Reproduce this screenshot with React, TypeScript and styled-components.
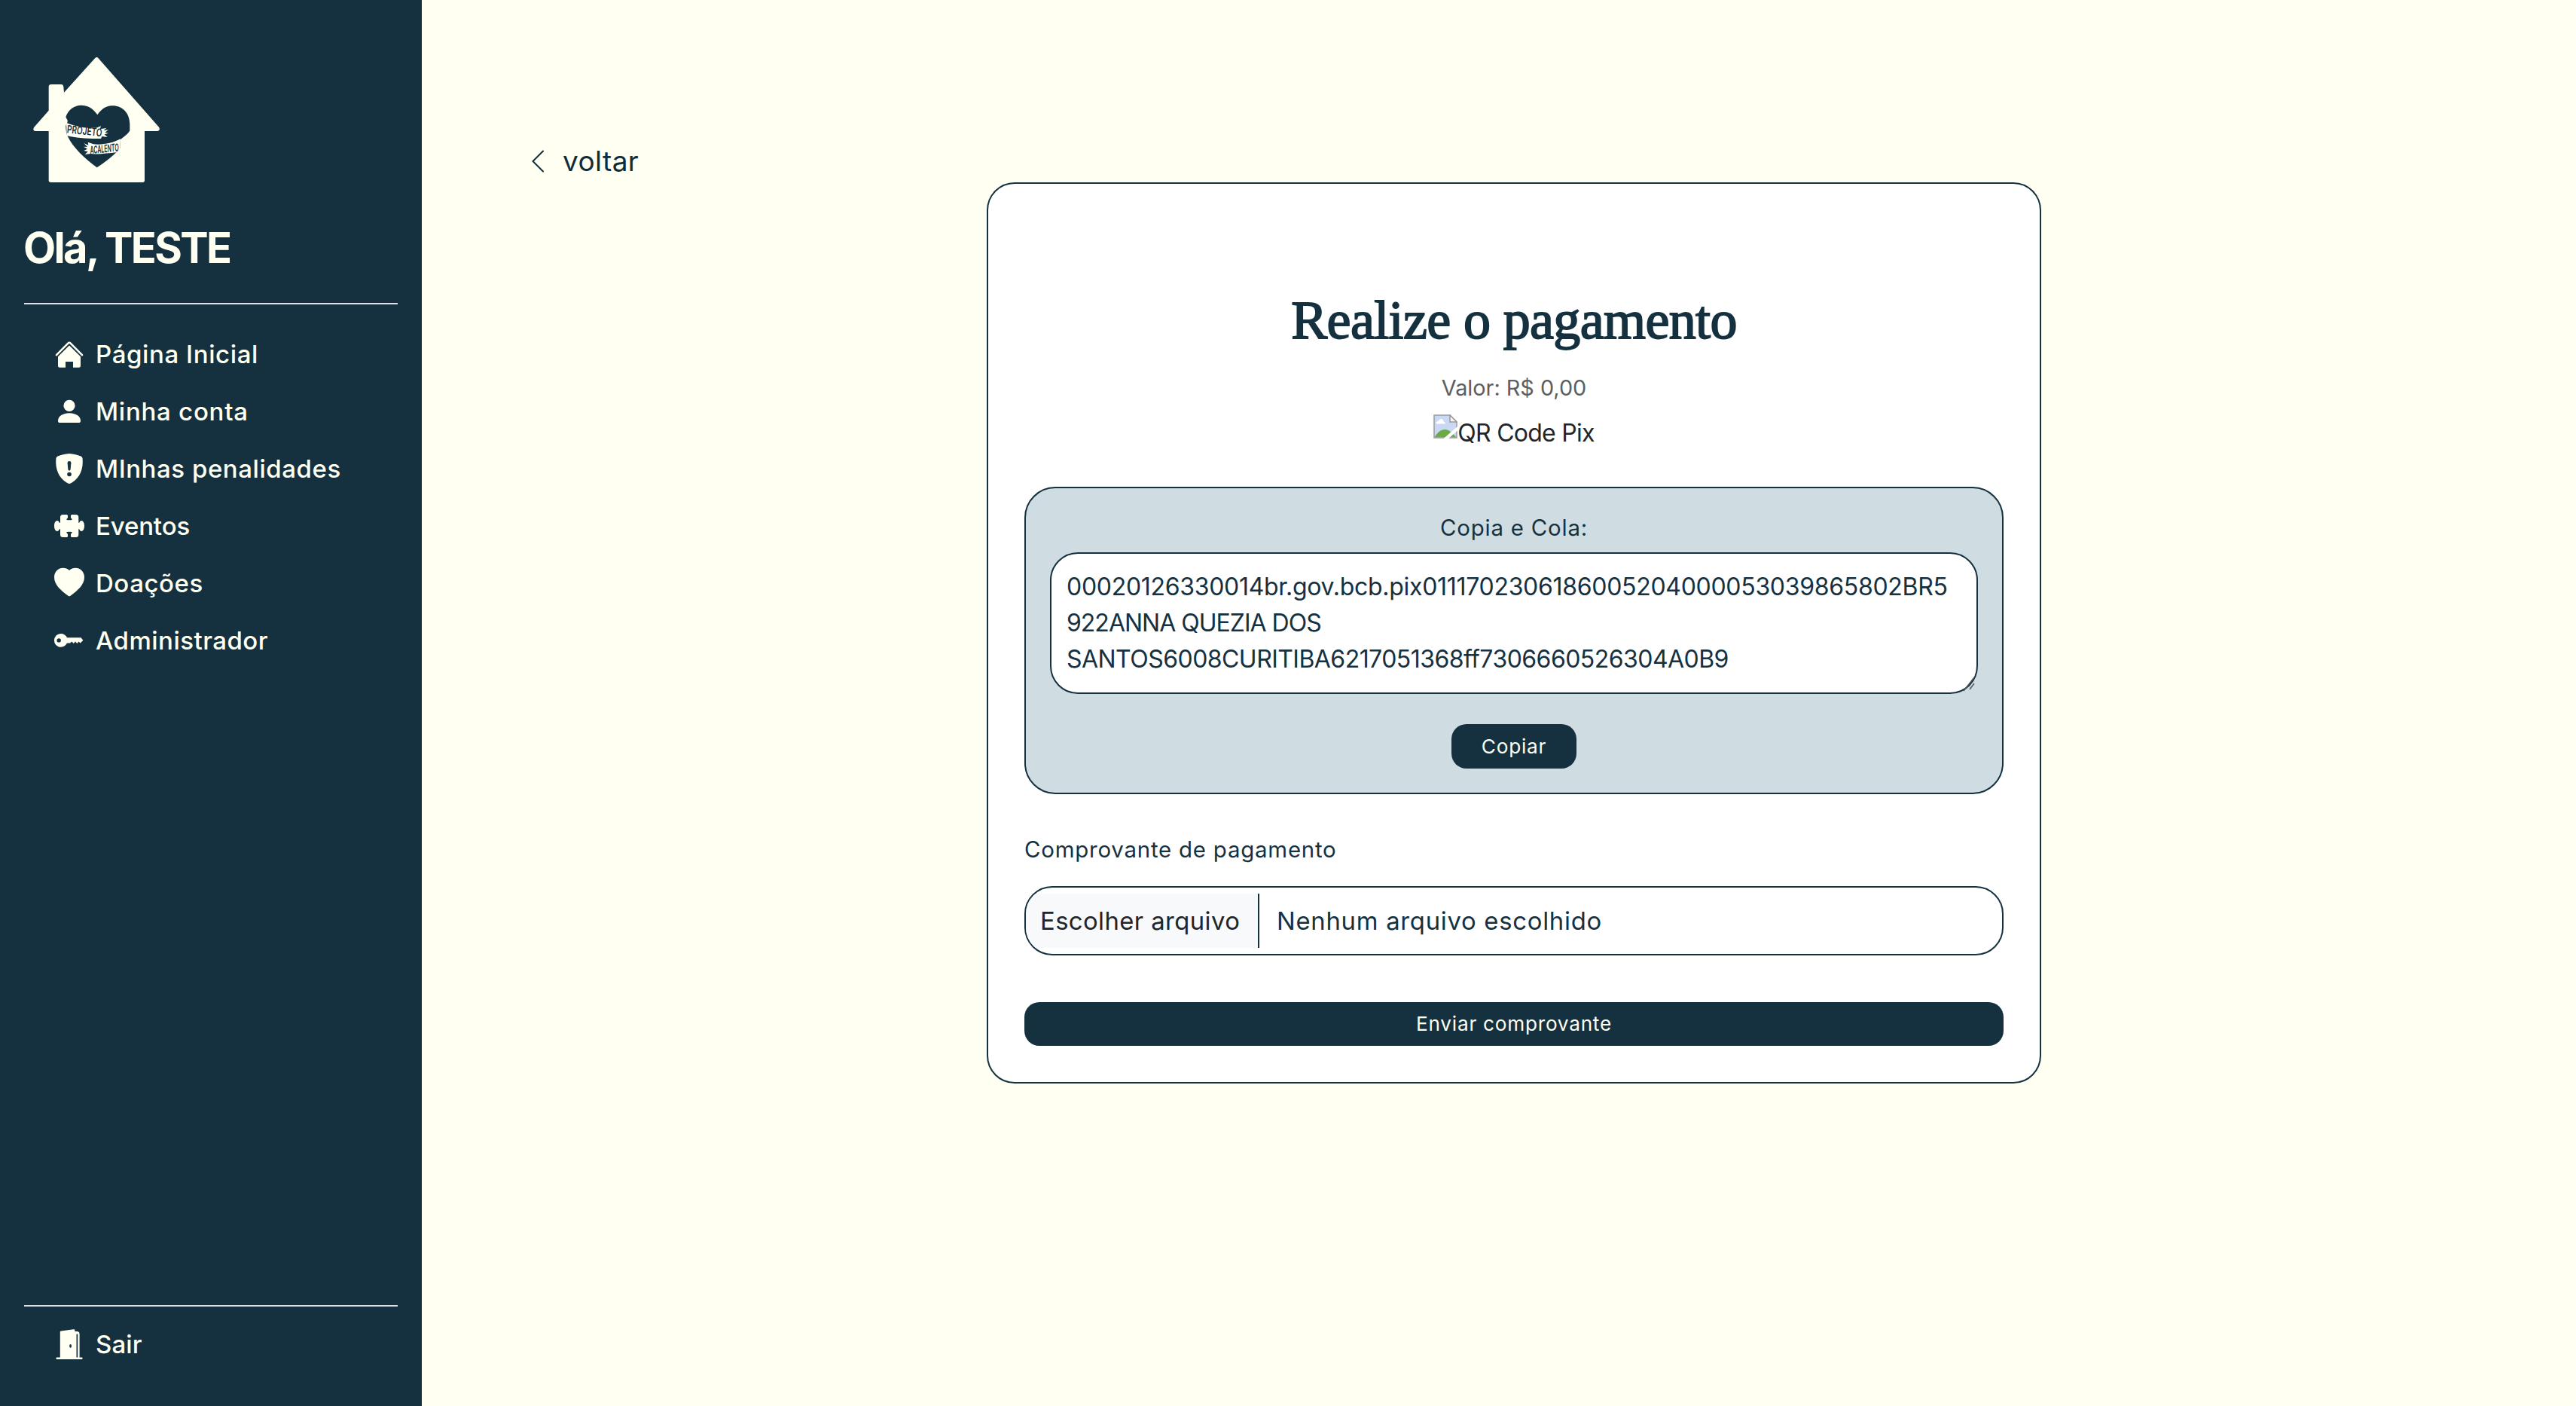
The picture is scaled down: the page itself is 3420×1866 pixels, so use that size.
import React from "react";
import styled, { createGlobalStyle } from "styled-components";

const navy = "#15313f";
const cream = "#fffff2";

const GlobalStyle = createGlobalStyle`
  * { box-sizing: border-box; }
  body {
    margin: 0;
    background: ${cream};
    font-family: Inter, "Open Sans", sans-serif;
    color: ${navy};
  }
`;

const Page = styled.div`
  display: flex;
  width: 3420px;
  height: 1866px;
  overflow: hidden;
  background: ${cream};
`;

const Sidebar = styled.aside`
  display: flex;
  flex-direction: column;
  width: 560px;
  height: 100%;
  padding: 76px 32px 62px;
  background: ${navy};
  color: ${cream};
`;

const LogoArt = styled.svg`
  flex: none;
  width: 168px;
  height: 166px;
  margin-left: 12px;
`;

const Greeting = styled.h1`
  margin: 54px 0 39px -1px;
  font-size: 56px;
  font-weight: 700;
  line-height: 67px;
  letter-spacing: -2.6px;
`;

const Divider = styled.hr`
  flex: none;
  width: 100%;
  height: 2px;
  margin: 0;
  border: 0;
  background: #dee2e6;
`;

const Nav = styled.nav<{ $top: number }>`
  display: flex;
  flex-direction: column;
  gap: 36px;
  margin-top: ${(p) => p.$top}px;
  padding-left: 40px;
`;

const NavItem = styled.a<{ $tracking: number }>`
  display: flex;
  align-items: center;
  gap: 15px;
  height: 40px;
  font-size: 33px;
  font-weight: 500;
  line-height: 40px;
  letter-spacing: ${(p) => p.$tracking}px;
  white-space: nowrap;
`;

const NavIcon = styled.svg`
  width: 40px;
  height: 40px;
  overflow: visible;
  fill: ${cream};
`;

const Spacer = styled.div`
  flex: 1;
`;

const Main = styled.main`
  flex: 1;
  display: flex;
  flex-direction: column;
  align-items: flex-start;
  padding-top: 194px;
`;

const BackLink = styled.a`
  display: flex;
  align-items: center;
  gap: 25px;
  height: 40px;
  margin-left: 146px;
  font-size: 37px;
  line-height: 40px;
  letter-spacing: 0.4px;
  color: #102c39;
`;

const Card = styled.section`
  display: flex;
  flex-direction: column;
  align-items: center;
  width: 1400px;
  margin: 8px 0 0 750px;
  padding: 139px 48px 48px;
  border: 2px solid ${navy};
  border-radius: 37px;
  background: #fff;
`;

const Title = styled.h2`
  margin: 0;
  font-family: "Liberation Serif", serif;
  font-size: 72px;
  font-weight: 400;
  line-height: 85px;
  letter-spacing: -0.64px;
  -webkit-text-stroke: 1.8px ${navy};
`;

const Amount = styled.p`
  margin: 25px 0 13px;
  font-size: 28.8px;
  line-height: 44px;
  color: #5c5e60;
`;

const QrFallback = styled.div`
  display: flex;
  align-items: flex-start;
  height: 48px;
  font-size: 32px;
  line-height: 50px;
  letter-spacing: -0.75px;
  color: #212529;
`;

const Panel = styled.div`
  display: flex;
  flex-direction: column;
  align-items: center;
  width: 100%;
  margin-top: 48px;
  padding: 31px 32px 32px;
  border: 2px solid ${navy};
  border-radius: 41px;
  background: #cfdde2;
`;

const Label = styled.label`
  font-size: 29.4px;
  line-height: 44px;
  letter-spacing: 0.8px;
`;

const CodeBox = styled.div`
  position: relative;
  width: 100%;
  height: 188px;
  margin: 10px 0 40px;
  padding: 20px 20px;
  border: 2px solid ${navy};
  border-radius: 37px;
  background: #fff;
`;

const CodeLine = styled.div<{ $tracking: number }>`
  font-size: 32px;
  line-height: 48px;
  letter-spacing: ${(p) => p.$tracking}px;
  white-space: nowrap;
`;

const ResizeGrip = styled.svg`
  position: absolute;
  right: 0;
  bottom: 0;
`;

const Button = styled.button<{ $width: string; $height: number }>`
  width: ${(p) => p.$width};
  height: ${(p) => p.$height}px;
  padding: 0 0 1px;
  border: 0;
  border-radius: 20px;
  background: ${navy};
  color: ${cream};
  font-family: inherit;
  font-size: 26.2px;
  letter-spacing: 0.75px;
`;

const FieldLabel = styled(Label)`
  align-self: flex-start;
  margin: 52px 0 26px;
`;

const FileField = styled.div`
  display: flex;
  width: 100%;
  height: 92px;
  margin-bottom: 62px;
  padding: 8px 0;
  overflow: hidden;
  border: 2px solid ${navy};
  border-radius: 37px;
  background: #fff;
  font-size: 32.8px;
  line-height: 72px;
`;

const FileButton = styled.span`
  width: 310px;
  padding-left: 19px;
  border-right: 2px solid ${navy};
  background: #f8f9fa;
  color: #212529;
  letter-spacing: 0.42px;
  white-space: nowrap;
`;

const FileName = styled.span`
  padding-left: 23px;
  letter-spacing: 0.74px;
`;

function Logo() {
  return (
    <LogoArt viewBox="132 108 504 498">
      <path
        fill={cream}
        d="M379 111Q385 105 391 111L633 386Q640 400 628 402H576V598Q576 606 568 606H202Q194 606 194 598V402H140Q128 400 136 386L194 320V226Q194 216 204 216H243Q252 216 253 226L255 248Z"
      />
      <path
        fill={navy}
        d="M388 337C369 309 347 299 323 299C295 299 271 318 262 346L270 362L262 380C262 398 264 412 270 424C291 468 338 512 386 547C424 522 458 494 478 470L480 436C499 420 511 412 517 400V374C516 330 488 300 446 301C420 302 405 314 388 337Z"
      />
      <path
        fill={cream}
        d="M264 368C300 384 345 392 384 389L402 382L398 394L424 390L412 400L432 397L418 407L432 410L416 415L428 426L406 423L402 432C350 433 302 429 266 420Z"
      />
      <path
        fill={cream}
        d="M334 450L352 458L350 446L372 454C410 458 445 450 480 433L478 474L462 487C430 490 390 496 360 492L338 495L350 484L334 480L348 473L333 464L348 465Z"
      />
      <text
        x="266"
        y="409"
        fill={navy}
        fontFamily="Inter, sans-serif"
        fontWeight="600"
        fontSize="43"
        textLength="140"
        lengthAdjust="spacingAndGlyphs"
        transform="rotate(6 266 407)"
      >
        PROJETO
      </text>
      <text
        x="360"
        y="493"
        fill={navy}
        fontFamily="Inter, sans-serif"
        fontWeight="600"
        fontSize="42"
        fontStyle="italic"
        textLength="115"
        lengthAdjust="spacingAndGlyphs"
        transform="rotate(-6 360 493)"
      >
        ACALENTO
      </text>
    </LogoArt>
  );
}

const icons = {
  home: (
    <>
      <path
        d="M3 21.2L18.6 5.4Q20 4 21.4 5.4L37 21.2"
        fill="none"
        stroke={cream}
        strokeWidth="2.6"
        strokeLinecap="round"
        strokeLinejoin="round"
      />
      <path d="M20 8.4L35 23.2V35.6Q35 37.8 32.8 37.8H25V30H15V37.8H7.2Q5 37.8 5 35.6V23.2Z" />
    </>
  ),
  person: (
    <>
      <circle cx="20" cy="12.4" r="7.6" />
      <path d="M5 32.4C5 26.4 11.5 22.2 20 22.2S35 26.4 35 32.4Q35 35 32.4 35H7.6Q5 35 5 32.4Z" />
    </>
  ),
  shield: (
    <>
      <path d="M20 0C26 .2 30.5 1.8 35.4 3.4Q37.4 4.2 37.6 6.4C38.8 20 34.5 31.5 23.5 38.6Q20 41.2 16.5 38.6C5.5 31.5 1.2 20 2.4 6.4Q2.6 4.2 4.6 3.4C9.5 1.8 14 .2 20 0Z" />
      <path
        fill={navy}
        d="M17.6 12.2Q17.7 10 20 10T22.4 12.2L21.6 21Q21.4 22.6 20 22.6T18.4 21Z"
      />
      <circle cx="20" cy="27.5" r="2.8" fill={navy} />
    </>
  ),
  puzzle: (
    <path d="M11.5 5H16.5Q18 5 18 6.5V8.5Q18 9.5 17 10.3Q16.200 11 16.4 12Q20 12.7 23.6 12Q23.800 11 23 10.3Q22 9.5 22 8.5V6.5Q22 5 23.5 5H28.800Q32.300 5 32.300 8.5V16C34.200 16 33.5 13 36 13C38.5 13 40 16 40 20S38.5 27 36 27C33.5 27 34.200 24 32.300 24V31.5Q32.300 35 28.800 35H23.5Q22 35 22 33.5V31.5Q22 30.5 23 29.7Q23.800 29 23.600 28Q20 27.300 16.400 28Q16.200 29 17 29.700Q18 30.500 18 31.500V33.500Q18 35 16.500 35H11.500Q8 35 8 31.500V24C6 24 6.500 27 4 27C1.500 27 0 24 0 20S1.500 13 4 13C6.500 13 6 16 8 16V8.500Q8 5 11.500 5Z" />
  ),
  heart: (
    <path d="M20 3C17.8 .8 14.8 -.3 11.6 -.3C5 -.3 0 5 0 12C0 22 8.5 29.5 18.5 36.7Q20 38 21.5 36.7C31.5 29.5 40 22 40 12C40 5 35 -.3 28.4 -.3C25.2 -.3 22.2 .8 20 3Z" />
  ),
  key: (
    <path
      fillRule="evenodd"
      d="M9 11C12.500 11 15.500 13 17 16.200H35.500L38.400 19.800L34.700 23.500L32.500 21.600L30.400 24L28 21.600L25.700 24L23.300 21.600L21 23.500H17C15.500 26.500 12.500 28.700 9 28.700C4 28.700 0 24.900 0 19.900S4 11 9 11ZM6.200 17.200A2.700 2.700 0 1 0 6.200 22.600A2.700 2.700 0 1 0 6.200 17.200Z"
    />
  ),
  door: (
    <>
      <path d="M7.800 3.600Q7.800 2.600 8.800 2.400L25.500 .2Q27.400 0 27.400 1.600V3H31Q33.600 3.400 33.600 6V38H31.200V6.500H29.500V38H7.800Z" />
      <rect x="2.400" y="37.600" width="35.200" height="2.400" rx="1.200" />
      <ellipse cx="21.600" cy="22.400" rx="1.400" ry="2.300" fill={navy} />
    </>
  ),
};

type IconName = keyof typeof icons;

const menu: { icon: IconName; text: string; tracking: number }[] = [
  { icon: "home", text: "Página Inicial", tracking: 0.6 },
  { icon: "person", text: "Minha conta", tracking: 0.74 },
  { icon: "shield", text: "MInhas penalidades", tracking: 0.55 },
  { icon: "puzzle", text: "Eventos", tracking: -0.15 },
  { icon: "heart", text: "Doações", tracking: 0.55 },
  { icon: "key", text: "Administrador", tracking: 0.48 },
];

const code = [
  { text: "00020126330014br.gov.bcb.pix0111702306186005204000053039865802BR5", tracking: -0.3 },
  { text: "922ANNA QUEZIA DOS", tracking: -1 },
  { text: "SANTOS6008CURITIBA6217051368ff7306660526304A0B9", tracking: -0.54 },
];

function MenuLink({ icon, text, tracking }: { icon: IconName; text: string; tracking: number }) {
  return (
    <NavItem $tracking={tracking}>
      <NavIcon viewBox="0 0 40 40">{icons[icon]}</NavIcon>
      {text}
    </NavItem>
  );
}

function BrokenImage() {
  return (
    <svg width="32" height="32" viewBox="0 0 32 32">
      <path d="M1 1H22L31 10V31H1Z" fill="#c9d8f5" stroke="#9a9a9a" strokeWidth="1.5" />
      <path d="M5 12.5Q3 12.5 3.5 10.5Q4.500 9 6.5 9Q8 5.500 11 6Q13.500 6.500 13.700 9.500Q16 10 15.600 12.500Z" fill="#fff" />
      <path d="M1.700 30.300C5 24 10 20 15.500 20C20 20 25 24 30.300 30.300Z" fill="#6aab46" />
      <path d="M13.500 32L32 16V21.500L20 32Z" fill="#fff" />
      <path d="M22 1V10H31Z" fill="#f6f6f6" stroke="#9a9a9a" strokeWidth="1.5" />
    </svg>
  );
}

export default function App() {
  return (
    <Page>
      <GlobalStyle />
      <Sidebar>
        <Logo />
        <Greeting>Olá, TESTE</Greeting>
        <Divider />
        <Nav $top={46}>
          {menu.map((item) => (
            <MenuLink key={item.text} {...item} />
          ))}
        </Nav>
        <Spacer />
        <Divider />
        <Nav $top={30}>
          <MenuLink icon="door" text="Sair" tracking={0.15} />
        </Nav>
      </Sidebar>
      <Main>
        <BackLink>
          <svg width="16" height="30" viewBox="0 0 16 30">
            <path
              d="M15 1.500L1.500 15L15 28.500"
              fill="none"
              stroke="#102c39"
              strokeWidth="2"
              strokeLinecap="round"
              strokeLinejoin="round"
            />
          </svg>
          voltar
        </BackLink>
        <Card>
          <Title>Realize o pagamento</Title>
          <Amount>Valor: R$ 0,00</Amount>
          <QrFallback>
            <BrokenImage />
            QR Code Pix
          </QrFallback>
          <Panel>
            <Label>Copia e Cola:</Label>
            <CodeBox>
              {code.map((line) => (
                <CodeLine key={line.text} $tracking={line.tracking}>
                  {line.text}
                </CodeLine>
              ))}
              <ResizeGrip width="18" height="26" viewBox="0 0 18 26">
                <path d="M1 24L15 6M9 22L15 14" stroke="#555" strokeWidth="1.500" fill="none" />
              </ResizeGrip>
            </CodeBox>
            <Button $width="166px" $height={59}>
              Copiar
            </Button>
          </Panel>
          <FieldLabel>Comprovante de pagamento</FieldLabel>
          <FileField>
            <FileButton>Escolher arquivo</FileButton>
            <FileName>Nenhum arquivo escolhido</FileName>
          </FileField>
          <Button $width="100%" $height={58}>
            Enviar comprovante
          </Button>
        </Card>
      </Main>
    </Page>
  );
}
